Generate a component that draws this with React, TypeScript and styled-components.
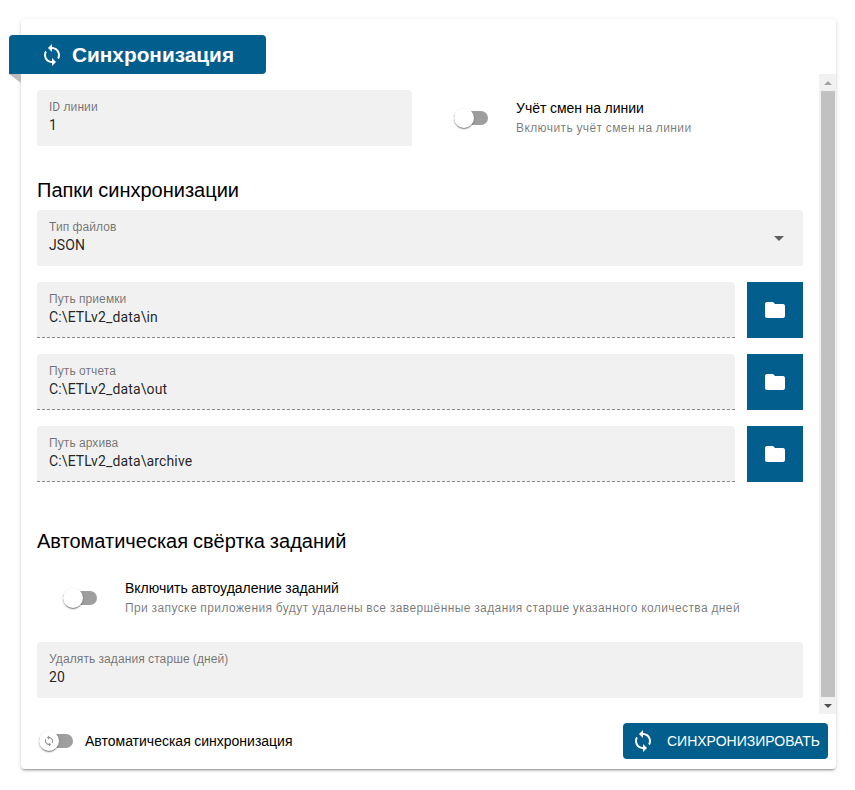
import React from "react";
import styled, { createGlobalStyle } from "styled-components";

const BLUE = "#025e8d";

const Global = createGlobalStyle`
  html, body { margin: 0; padding: 0; background: #fff; }
  body { font-family: "Liberation Sans", Arial, sans-serif; color: rgba(0,0,0,0.87); }
  * { box-sizing: border-box; }
`;

const Page = styled.div`
  width: 855px;
  height: 790px;
  padding: 19px 19px 21px 21px;
`;

const Card = styled.section`
  height: 750px;
  background: #fff;
  border-radius: 4px;
  box-shadow: 0 3px 1px -2px rgba(0,0,0,.2), 0 2px 2px 0 rgba(0,0,0,.14), 0 1px 5px 0 rgba(0,0,0,.12);
  display: flex;
  flex-direction: column;
  padding-top: 16px;
`;

const TitleTab = styled.h1`
  position: relative;
  margin: 0 0 0 -12px;
  width: 257px;
  height: 39px;
  flex: none;
  display: flex;
  align-items: center;
  gap: 8px;
  padding-left: 31px;
  background: ${BLUE};
  color: #fff;
  border-radius: 4px 4px 4px 0;
  font-size: 20.8px;
  font-weight: 700;
  line-height: 24px;
  &::after {
    content: "";
    position: absolute;
    left: 0;
    top: 100%;
    border-style: solid;
    border-width: 0 12px 9px 0;
    border-color: transparent #bdbdbd transparent transparent;
  }
`;

const Body = styled.div`
  flex: 1;
  min-height: 0;
  display: flex;
`;

const Content = styled.div`
  flex: 1;
  min-width: 0;
  padding: 16px 16px 0;
  display: flex;
  flex-direction: column;
`;

const Scrollbar = styled.div`
  width: 17px;
  flex: none;
  height: 640px;
  background: #f1f1f1;
  display: flex;
  flex-direction: column;
  align-items: center;
`;

const ScrollArrow = styled.div<{ $down?: boolean }>`
  height: 17px;
  flex: none;
  width: 100%;
  display: flex;
  align-items: center;
  justify-content: center;
  &::before {
    content: "";
    border-left: 4px solid transparent;
    border-right: 4px solid transparent;
    ${(p) => (p.$down ? "border-top: 4px solid #505050;" : "border-bottom: 4px solid #a3a3a3;")}
  }
`;

const ScrollThumb = styled.div`
  flex: 1;
  width: 14px;
  margin: 0 auto;
  background: #c1c1c1;
`;

const TopGrid = styled.div`
  display: grid;
  grid-template-columns: 375px 375px;
  gap: 16px;
`;

const Field = styled.div<{ $dashed?: boolean }>`
  position: relative;
  height: 56px;
  flex: ${(p) => (p.$dashed ? "1" : "none")};
  background: #f1f1f1;
  border-radius: 4px 4px 0 0;
  padding: 10px 12px 0;
  border-bottom: ${(p) => (p.$dashed ? "1px dashed #8a8a8a" : "0")};
`;

const FieldLabel = styled.div`
  font-size: 12px;
  line-height: 14px;
  color: rgba(0,0,0,0.54);
  letter-spacing: 0.11px;
  word-spacing: -0.35px;
`;

const Latin = styled.span`
  font-family: Roboto, sans-serif;
`;

const FieldValue = styled.div`
  margin-top: 3px;
  font-family: Roboto, sans-serif;
  font-size: 14px;
  line-height: 17px;
  letter-spacing: 0.13px;
  color: rgba(0,0,0,0.87);
`;

const SwitchRow = styled.div<{ $indent: number }>`
  height: 56px;
  display: flex;
  align-items: center;
  padding-left: ${(p) => p.$indent}px;
  gap: 28px;
`;

const Track = styled.span`
  position: relative;
  flex: none;
  width: 34px;
  height: 14px;
  border-radius: 7px;
  background: #9e9e9e;
  display: block;
`;

const Thumb = styled.span`
  position: absolute;
  left: 0;
  top: -3px;
  width: 20px;
  height: 20px;
  border-radius: 50%;
  background: #fff;
  color: #8a8a8a;
  display: flex;
  align-items: center;
  justify-content: center;
  box-shadow: 0 2px 1px -1px rgba(0,0,0,.3), 0 1px 1px 0 rgba(0,0,0,.18), 0 1px 3px 0 rgba(0,0,0,.16);
`;

const SwitchText = styled.div`
  display: flex;
  flex-direction: column;
  gap: 4px;
  margin-bottom: 1px;
`;

const SwitchTitle = styled.div`
  font-size: 14px;
  line-height: 16px;
  color: #000;
  word-spacing: -0.4px;
`;

const SwitchHint = styled.div`
  font-size: 12px;
  line-height: 16px;
  color: rgba(0,0,0,0.54);
  letter-spacing: 0.4px;
  word-spacing: -0.35px;
`;

const Heading = styled.h2<{ $top: number; $bottom: number }>`
  margin: ${(p) => p.$top}px 0 ${(p) => p.$bottom}px;
  font-size: 20px;
  font-weight: 400;
  line-height: 24px;
  color: #000;
  word-spacing: -0.6px;
`;

const SelectArrow = styled.svg`
  position: absolute;
  right: 12px;
  top: 16px;
  width: 24px;
  height: 24px;
  fill: rgba(0,0,0,0.6);
`;

const PathRows = styled.div`
  margin-top: 16px;
  display: flex;
  flex-direction: column;
  gap: 16px;
`;

const PathRow = styled.div`
  display: flex;
  gap: 12px;
`;

const FolderButton = styled.button`
  flex: none;
  width: 56px;
  height: 56px;
  border: 0;
  padding: 0;
  background: ${BLUE};
  color: #fff;
  display: flex;
  align-items: center;
  justify-content: center;
`;

const Footer = styled.div`
  flex: none;
  height: 54px;
  margin-bottom: 1px;
  display: flex;
  align-items: center;
  justify-content: space-between;
  padding: 0 8px 0 18px;
`;

const AutoSync = styled.label`
  display: flex;
  align-items: center;
  gap: 12px;
  font-size: 14px;
  color: #000;
  word-spacing: -0.4px;
`;

const SyncButton = styled.button`
  width: 205px;
  height: 36px;
  border: 0;
  border-radius: 4px;
  background: ${BLUE};
  color: #fff;
  display: flex;
  align-items: center;
  gap: 12px;
  padding: 0 0 0 8px;
  font-family: "Liberation Sans", Arial, sans-serif;
  font-size: 14px;
  font-weight: 400;
  line-height: 36px;
  text-transform: uppercase;
  white-space: nowrap;
`;

const SYNC = "M12 4V1L8 5l4 4V6c3.31 0 6 2.69 6 6 0 1.01-.25 1.97-.7 2.8l1.46 1.46C19.54 15.03 20 13.57 20 12c0-4.42-3.58-8-8-8zm0 14c-3.31 0-6-2.69-6-6 0-1.01.25-1.97.7-2.8L5.24 7.74C4.46 8.97 4 10.43 4 12c0 4.42 3.58 8 8 8v3l4-4-4-4v3z";
const FOLDER = "M10 4H4c-1.1 0-1.99.9-1.99 2L2 18c0 1.1.9 2 2 2h16c1.1 0 2-.9 2-2V8c0-1.1-.9-2-2-2h-8l-2-2z";

const Icon = ({ d, size = 24 }: { d: string; size?: number }) => (
  <svg width={size} height={size} viewBox="0 0 24 24" fill="currentColor" aria-hidden="true">
    <path d={d} />
  </svg>
);

const Switch = ({ icon }: { icon?: boolean }) => (
  <Track>
    <Thumb>{icon && <Icon d={SYNC} size={12} />}</Thumb>
  </Track>
);

const paths = [
  { label: "Путь приемки", value: "C:\\ETLv2_data\\in" },
  { label: "Путь отчета", value: "C:\\ETLv2_data\\out" },
  { label: "Путь архива", value: "C:\\ETLv2_data\\archive" },
];

export default function App() {
  return (
    <Page>
      <Global />
      <Card>
        <TitleTab>
          <Icon d={SYNC} />
          Синхронизация
        </TitleTab>
        <Body>
          <Content>
            <TopGrid>
              <Field>
                <FieldLabel><Latin>ID</Latin> линии</FieldLabel>
                <FieldValue>1</FieldValue>
              </Field>
              <SwitchRow $indent={26}>
                <Switch />
                <SwitchText>
                  <SwitchTitle>Учёт смен на линии</SwitchTitle>
                  <SwitchHint>Включить учёт смен на линии</SwitchHint>
                </SwitchText>
              </SwitchRow>
            </TopGrid>
            <Heading $top={32} $bottom={8}>Папки синхронизации</Heading>
            <Field>
              <FieldLabel>Тип файлов</FieldLabel>
              <FieldValue>JSON</FieldValue>
              <SelectArrow viewBox="0 0 24 24" aria-hidden="true">
                <path d="M7 10l5 5 5-5z" />
              </SelectArrow>
            </Field>
            <PathRows>
              {paths.map((p) => (
                <PathRow key={p.label}>
                  <Field $dashed>
                    <FieldLabel>{p.label}</FieldLabel>
                    <FieldValue>{p.value}</FieldValue>
                  </Field>
                  <FolderButton aria-label={p.label}>
                    <Icon d={FOLDER} />
                  </FolderButton>
                </PathRow>
              ))}
            </PathRows>
            <Heading $top={47} $bottom={17}>Автоматическая свёртка заданий</Heading>
            <SwitchRow $indent={26}>
              <Switch />
              <SwitchText>
                <SwitchTitle>Включить автоудаление заданий</SwitchTitle>
                <SwitchHint>При запуске приложения будут удалены все завершённые задания старше указанного количества дней</SwitchHint>
              </SwitchText>
            </SwitchRow>
            <PathRows>
              <Field>
                <FieldLabel>Удалять задания старше (дней)</FieldLabel>
                <FieldValue>20</FieldValue>
              </Field>
            </PathRows>
          </Content>
          <Scrollbar>
            <ScrollArrow />
            <ScrollThumb />
            <ScrollArrow $down />
          </Scrollbar>
        </Body>
        <Footer>
          <AutoSync>
            <Switch icon />
            Автоматическая синхронизация
          </AutoSync>
          <SyncButton>
            <Icon d={SYNC} />
            Синхронизировать
          </SyncButton>
        </Footer>
      </Card>
    </Page>
  );
}
